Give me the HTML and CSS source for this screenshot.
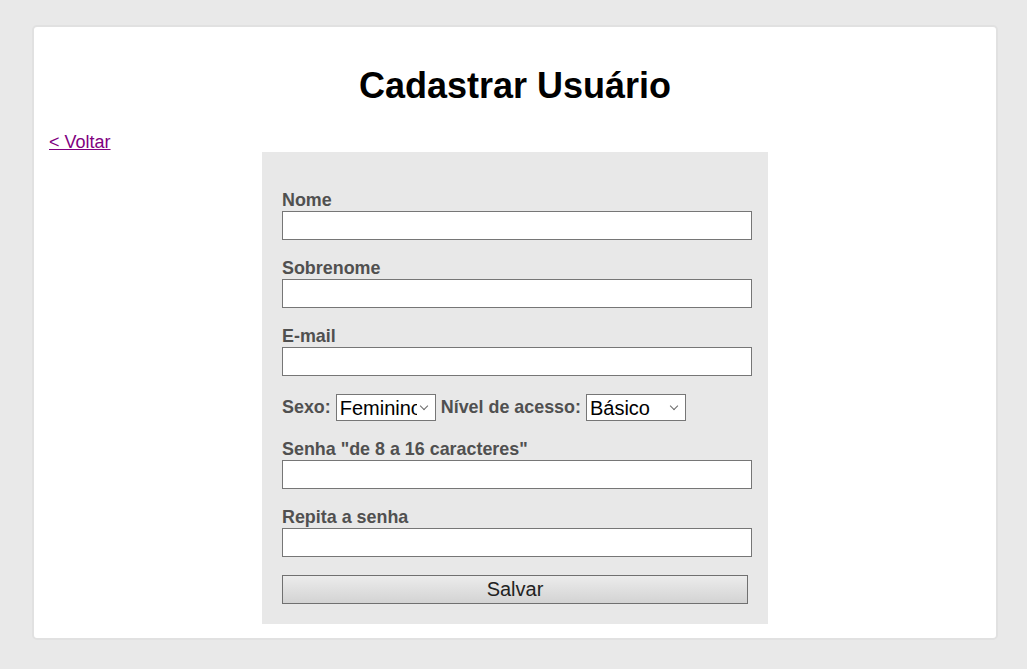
FILE: index.html
```html
<!DOCTYPE html>
<html lang="pt-BR">
<head>
<meta charset="utf-8">
<title>Cadastrar Usuário</title>
<link rel="stylesheet" href="styles.css">
</head>
<body>
<div class="card">
  <h1 class="title">Cadastrar Usuário</h1>
  <a class="back" href="#">&lt; Voltar</a>
  <form class="form">
    <div class="field">
      <label class="label" for="nome">Nome</label>
      <input class="input" id="nome" type="text">
    </div>
    <div class="field">
      <label class="label" for="sobrenome">Sobrenome</label>
      <input class="input" id="sobrenome" type="text">
    </div>
    <div class="field">
      <label class="label" for="email">E-mail</label>
      <input class="input" id="email" type="text">
    </div>
    <div class="field row">
      <label class="label-inline" for="sexo">Sexo:</label>
      <span class="select-wrap"><select class="select" id="sexo"><option>Feminino</option><option>Masculino</option></select></span>
      <label class="label-inline" for="nivel">Nível de acesso:</label>
      <span class="select-wrap"><select class="select" id="nivel"><option>Básico</option><option>Administrador</option></select></span>
    </div>
    <div class="field">
      <label class="label" for="senha">Senha "de 8 a 16 caracteres"</label>
      <input class="input" id="senha" type="password">
    </div>
    <div class="field">
      <label class="label" for="repita">Repita a senha</label>
      <input class="input" id="repita" type="password">
    </div>
    <button class="button" type="button">Salvar</button>
  </form>
</div>
</body>
</html>
```
FILE: styles.css
```css
html, body {
  margin: 0;
  padding: 0;
}
body {
  background: #e9e9e9;
  font-family: "Liberation Sans", Arial, sans-serif;
  padding: 25px 29px 29px 32px;
}
.card {
  box-sizing: border-box;
  width: 966px;
  height: 615px;
  background: #fff;
  border: 2px solid #e1e1e1;
  border-radius: 5px;
  padding: 0 15px;
}
.title {
  margin: 38px 0 0;
  font-size: 36px;
  line-height: 42px;
  font-weight: bold;
  text-align: center;
  color: #000;
}
.back {
  display: inline-block;
  margin-top: 25px;
  font-size: 18px;
  line-height: 20px;
  color: #800080;
  text-decoration: underline;
}
.form {
  box-sizing: border-box;
  width: 506px;
  margin: 0 auto;
  padding: 38px 16px 20px 20px;
  background: #e8e8e8;
}
.field {
  margin-bottom: 18px;
}
.label {
  display: block;
  font-size: 17.9px;
  line-height: 21px;
  font-weight: bold;
  color: #505050;
}
.input {
  display: block;
  box-sizing: border-box;
  width: 470px;
  height: 29px;
  margin: 0;
  border: 1px solid #767676;
  background: #fff;
  border-radius: 0;
  padding: 0 4px;
  font-size: 16px;
}
.row {
  display: flex;
  align-items: center;
  gap: 5px;
}
.label-inline {
  font-size: 17.9px;
  font-weight: bold;
  color: #505050;
}
.select-wrap {
  position: relative;
  display: block;
}
.select-wrap::after {
  content: "";
  position: absolute;
  right: 9px;
  top: 9px;
  width: 5px;
  height: 5px;
  border-right: 1px solid #6a6a6a;
  border-bottom: 1px solid #6a6a6a;
  transform: rotate(45deg);
  pointer-events: none;
}
.select {
  display: block;
  box-sizing: border-box;
  width: 100px;
  height: 27px;
  margin: 0;
  border: 1px solid #767676;
  border-radius: 0;
  background-color: #fff;
  appearance: none;
  -webkit-appearance: none;
  font-family: "Liberation Sans", Arial, sans-serif;
  font-size: 20px;
  color: #000;
  padding: 0 18px 0 3px;
}
.button {
  display: block;
  box-sizing: border-box;
  width: 466px;
  height: 29px;
  margin: 0;
  border: 1px solid #707070;
  border-radius: 0;
  background: linear-gradient(#ececec, #d3d3d3);
  font-family: "Liberation Sans", Arial, sans-serif;
  font-size: 20px;
  color: #222;
  padding: 0;
}
```
